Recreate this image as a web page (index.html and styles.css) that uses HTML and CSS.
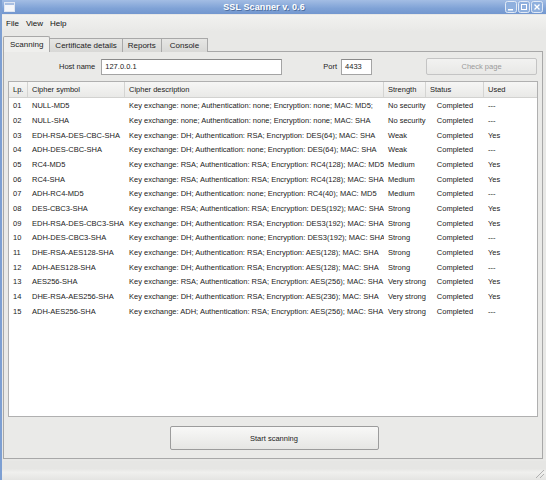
FILE: index.html
```html
<!DOCTYPE html>
<html>
<head>
<meta charset="utf-8">
<link rel="stylesheet" href="styles.css">
</head>
<body>
<div class="window">
  <div class="titlebar">
    <svg class="appicon" width="11" height="10" viewBox="0 0 11 10"><rect x="0.5" y="0.5" width="10" height="9" fill="#f4f6fa" stroke="#dfe6f2"/><rect x="1" y="1" width="9" height="2" fill="#a9bfe2"/></svg>
    <div class="title">SSL Scanner v. 0.6</div>
    <div class="wbtns">
      <svg width="12" height="12" viewBox="0 0 12 12"><rect x="0.5" y="0.5" width="11" height="11" rx="2" fill="#8fb0de" stroke="#e2eaf6"/><rect x="3" y="8" width="5" height="1.5" fill="#fff"/></svg>
      <svg width="12" height="12" viewBox="0 0 12 12"><rect x="0.5" y="0.5" width="11" height="11" rx="2" fill="#8fb0de" stroke="#e2eaf6"/><rect x="3.5" y="3.5" width="5" height="5" fill="none" stroke="#fff"/></svg>
      <svg width="12" height="12" viewBox="0 0 12 12"><rect x="0.5" y="0.5" width="11" height="11" rx="2" fill="#8fb0de" stroke="#e2eaf6"/><path d="M3.5 3.5 L8.5 8.5 M8.5 3.5 L3.5 8.5" stroke="#fff" stroke-width="1.4"/></svg>
    </div>
  </div>
  <div class="menubar">
    <span class="menu">File</span>
    <span class="menu">View</span>
    <span class="menu">Help</span>
  </div>
  <div class="tabs">
    <div class="tab active">Scanning</div>
    <div class="tab">Certificate details</div>
    <div class="tab">Reports</div>
    <div class="tab console">Console</div>
  </div>
  <div class="panel">
    <div class="formrow">
      <label class="lbl host">Host name</label>
      <div class="input hostinput">127.0.0.1</div>
      <label class="lbl port">Port</label>
      <div class="input portinput">4433</div>
      <div class="btn check">Check page</div>
    </div>
    <div class="table">
      <div class="row head">
        <div class="c lp">Lp.</div>
        <div class="c sym">Cipher symbol</div>
        <div class="c desc">Cipher description</div>
        <div class="c str">Strength</div>
        <div class="c stat hstat">Status</div>
        <div class="c used">Used</div>
      </div>
      <div class="row"><div class="c lp">01</div><div class="c sym">NULL-MD5</div><div class="c desc">Key exchange: none; Authentication: none; Encryption: none; MAC: MD5;</div><div class="c str">No security</div><div class="c stat">Completed</div><div class="c used">---</div></div>
      <div class="row"><div class="c lp">02</div><div class="c sym">NULL-SHA</div><div class="c desc">Key exchange: none; Authentication: none; Encryption: none; MAC: SHA</div><div class="c str">No security</div><div class="c stat">Completed</div><div class="c used">---</div></div>
      <div class="row"><div class="c lp">03</div><div class="c sym">EDH-RSA-DES-CBC-SHA</div><div class="c desc">Key exchange: DH; Authentication: RSA; Encryption: DES(64); MAC: SHA</div><div class="c str">Weak</div><div class="c stat">Completed</div><div class="c used">Yes</div></div>
      <div class="row"><div class="c lp">04</div><div class="c sym">ADH-DES-CBC-SHA</div><div class="c desc">Key exchange: DH; Authentication: none; Encryption: DES(64); MAC: SHA</div><div class="c str">Weak</div><div class="c stat">Completed</div><div class="c used">---</div></div>
      <div class="row"><div class="c lp">05</div><div class="c sym">RC4-MD5</div><div class="c desc">Key exchange: RSA; Authentication: RSA; Encryption: RC4(128); MAC: MD5</div><div class="c str">Medium</div><div class="c stat">Completed</div><div class="c used">Yes</div></div>
      <div class="row"><div class="c lp">06</div><div class="c sym">RC4-SHA</div><div class="c desc">Key exchange: RSA; Authentication: RSA; Encryption: RC4(128); MAC: SHA</div><div class="c str">Medium</div><div class="c stat">Completed</div><div class="c used">Yes</div></div>
      <div class="row"><div class="c lp">07</div><div class="c sym">ADH-RC4-MD5</div><div class="c desc">Key exchange: DH; Authentication: none; Encryption: RC4(40); MAC: MD5</div><div class="c str">Medium</div><div class="c stat">Completed</div><div class="c used">---</div></div>
      <div class="row"><div class="c lp">08</div><div class="c sym">DES-CBC3-SHA</div><div class="c desc">Key exchange: RSA; Authentication: RSA; Encryption: DES(192); MAC: SHA</div><div class="c str">Strong</div><div class="c stat">Completed</div><div class="c used">Yes</div></div>
      <div class="row"><div class="c lp">09</div><div class="c sym">EDH-RSA-DES-CBC3-SHA</div><div class="c desc">Key exchange: DH; Authentication: RSA; Encryption: DES3(192); MAC: SHA</div><div class="c str">Strong</div><div class="c stat">Completed</div><div class="c used">Yes</div></div>
      <div class="row"><div class="c lp">10</div><div class="c sym">ADH-DES-CBC3-SHA</div><div class="c desc">Key exchange: DH; Authentication: none; Encryption: DES3(192); MAC: SHA</div><div class="c str">Strong</div><div class="c stat">Completed</div><div class="c used">---</div></div>
      <div class="row"><div class="c lp">11</div><div class="c sym">DHE-RSA-AES128-SHA</div><div class="c desc">Key exchange: DH; Authentication: RSA; Encryption: AES(128); MAC: SHA</div><div class="c str">Strong</div><div class="c stat">Completed</div><div class="c used">Yes</div></div>
      <div class="row"><div class="c lp">12</div><div class="c sym">ADH-AES128-SHA</div><div class="c desc">Key exchange: DH; Authentication: RSA; Encryption: AES(128); MAC: SHA</div><div class="c str">Strong</div><div class="c stat">Completed</div><div class="c used">---</div></div>
      <div class="row"><div class="c lp">13</div><div class="c sym">AES256-SHA</div><div class="c desc">Key exchange: RSA; Authentication: RSA; Encryption: AES(256); MAC: SHA</div><div class="c str">Very strong</div><div class="c stat">Completed</div><div class="c used">Yes</div></div>
      <div class="row"><div class="c lp">14</div><div class="c sym">DHE-RSA-AES256-SHA</div><div class="c desc">Key exchange: DH; Authentication: RSA; Encryption: AES(236); MAC: SHA</div><div class="c str">Very strong</div><div class="c stat">Completed</div><div class="c used">Yes</div></div>
      <div class="row"><div class="c lp">15</div><div class="c sym">ADH-AES256-SHA</div><div class="c desc">Key exchange: ADH; Authentication: RSA; Encryption: AES(256); MAC: SHA</div><div class="c str">Very strong</div><div class="c stat">Completed</div><div class="c used">---</div></div>
    </div>
    <div class="btnrow">
      <div class="btn start">Start scanning</div>
    </div>
  </div>
  <div class="statusbar"><div class="grip"></div></div>
</div>
</body>
</html>
```
FILE: styles.css
```css
html, body {
  margin: 0;
  padding: 0;
}
body {
  width: 546px;
  height: 480px;
  overflow: hidden;
  font-family: "Liberation Sans", Arial, sans-serif;
  font-size: 7.5px;
  color: #222;
  background: #e8e8e6;
}
.window {
  height: 480px;
  display: flex;
  flex-direction: column;
  border-left: 2px solid #7d9fd2;
  box-sizing: border-box;
}
.titlebar {
  height: 14px;
  flex: none;
  display: flex;
  align-items: center;
  background: linear-gradient(#a3bde4, #7fa2d6 60%, #7397cf);
}
.appicon {
  margin-left: 2px;
  flex: none;
}
.title {
  flex: 1;
  text-align: center;
  color: #fff;
  font-weight: bold;
  font-size: 9px;
  letter-spacing: 0.1px;
  text-shadow: 1px 1px 0 #4f6f9f;
  padding-left: 8px;
}
.wbtns {
  display: flex;
  gap: 1px;
  margin-right: 3px;
}
.menubar {
  height: 17px;
  flex: none;
  display: flex;
  align-items: center;
  padding-left: 4px;
  gap: 7px;
  font-size: 8px;
  background: linear-gradient(#f2f2f0, #e8e8e6);
  margin-top: 1px;
}
.menu {
  color: #111;
}
.tabs {
  display: flex;
  margin-top: 5px;
  padding-left: 1px;
  height: 14px;
  flex: none;
  position: relative;
  z-index: 1;
  font-size: 8px;
}
.tab {
  display: flex;
  align-items: center;
  padding: 0 5px;
  border: 1px solid #a8a8a8;
  border-bottom: none;
  background: linear-gradient(#e6e6e4, #d8d8d6);
  color: #222;
  margin-left: -1px;
  height: 13px;
  margin-top: 1px;
}
.tab.active {
  background: #efefed;
  height: 15px;
  margin-top: -1px;
  padding: 0 6px;
  margin-left: 0;
  border-radius: 2px 2px 0 0;
}
.tab.console {
  padding: 0 8px;
}
.panel {
  margin: 0 3px 0 1px;
  border: 1px solid #a8a8a8;
  background: #eaeae8;
  height: 408px;
  display: flex;
  flex-direction: column;
  box-sizing: border-box;
}
.formrow {
  display: flex;
  align-items: center;
  height: 17px;
  margin-top: 6px;
}
.lbl {
  color: #222;
}
.host {
  margin-left: 55px;
}
.input {
  height: 16px;
  box-sizing: border-box;
  background: #fff;
  border: 1px solid #a4a4a4;
  border-top-color: #8a8a8a;
  display: flex;
  align-items: center;
  padding-left: 3px;
}
.hostinput {
  width: 181px;
  margin-left: 6px;
}
.port {
  margin-left: 41px;
}
.portinput {
  width: 31px;
  margin-left: 4px;
}
.btn {
  display: flex;
  align-items: center;
  justify-content: center;
  border: 1px solid #a8a8a8;
  border-radius: 2px;
  box-sizing: border-box;
  background: linear-gradient(#f8f8f7, #e6e6e4);
}
.check {
  width: 111px;
  height: 17px;
  margin-left: 54px;
  color: #9a9a9a;
  border-color: #c4c4c4;
  background: linear-gradient(#f2f2f1, #e8e8e6);
}
.table {
  margin: 6px 4px 0 4px;
  height: 336px;
  background: #fff;
  border: 1px solid #b0b0b0;
  box-sizing: border-box;
}
.row {
  display: flex;
  height: 14.7px;
  align-items: center;
}
.head {
  height: 15px;
  margin-bottom: 0.3px;
  background: linear-gradient(#f6f6f5, #e9e9e7);
  border-bottom: 1px solid #d2d2d0;
}
.head .c {
  height: 100%;
  display: flex;
  align-items: center;
  border-right: 1px solid #d4d4d2;
}
.head .c:last-child {
  border-right: none;
}
.c {
  white-space: nowrap;
  overflow: hidden;
  flex: none;
  box-sizing: border-box;
}
.lp {
  width: 19px;
  padding-left: 4px;
}
.sym {
  width: 97px;
  padding-left: 4px;
}
.desc {
  width: 259px;
  padding-left: 4px;
}
.str {
  width: 42px;
  padding-left: 4px;
}
.stat {
  width: 58px;
  text-align: center;
}
.head .hstat {
  padding-left: 4px;
}
.used {
  flex: 1;
  padding-left: 4px;
}
.btnrow {
  display: flex;
  justify-content: center;
  margin-top: 9px;
  padding-left: 2px;
}
.start {
  width: 209px;
  height: 24px;
  color: #222;
  border-color: #9c9c9c;
}
.statusbar {
  flex: 1;
  margin-top: 2px;
  background: linear-gradient(#e6e6e4 0%, #e6e6e4 40%, #f0f0ee 60%, #e4e4e2 100%);
  position: relative;
}
.grip {
  position: absolute;
  right: 2px;
  bottom: 2px;
  width: 10px;
  height: 10px;
  background: repeating-linear-gradient(135deg, transparent 0 2px, #b0b0b0 2px 3px);
  clip-path: polygon(100% 0, 100% 100%, 0 100%);
}
```
